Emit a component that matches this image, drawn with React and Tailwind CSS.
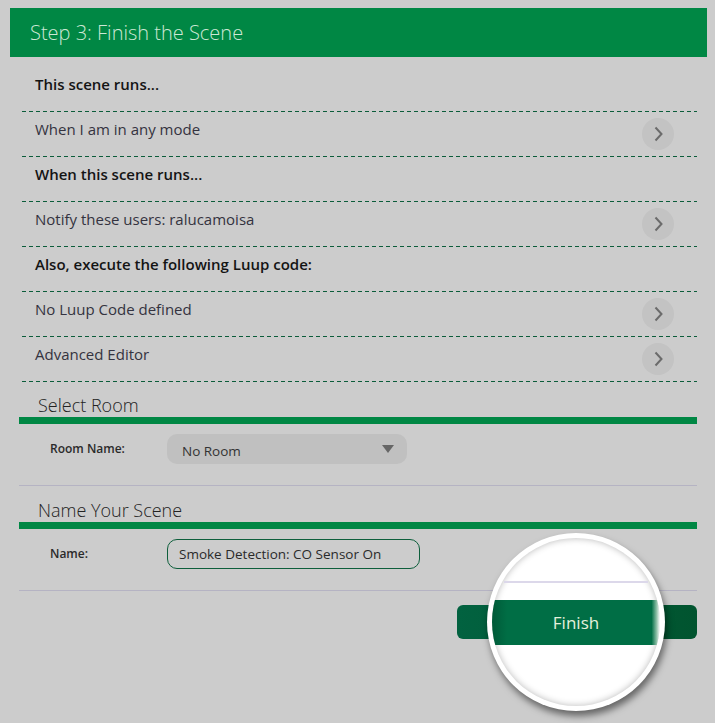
import React from "react";

const DASH =
  "h-px w-full bg-[image:repeating-linear-gradient(to_right,#0b5c3a_0_4px,transparent_4px_7px)]";

function Chevron() {
  return (
    <div className="w-[32px] h-[32px] rounded-full bg-[#c3c3c3] flex items-center justify-center shrink-0">
      <svg width="11" height="16" viewBox="0 0 11 16" fill="none">
        <path d="M2.5 1.5 L8.5 8 L2.5 14.5" stroke="#6b6b6b" strokeWidth="2" />
      </svg>
    </div>
  );
}

function HeadRow({ children }) {
  return (
    <div className="h-[44px] flex items-center pl-[13px]">
      <span className="mb-[10px] text-[15px] font-semibold text-[#141414]">{children}</span>
    </div>
  );
}

function LinkRow({ children }) {
  return (
    <div className="h-[44px] flex items-center justify-between pl-[13px] pr-[23px]">
      <span className="mb-[10px] text-[15px] text-[#343340]">{children}</span>
      <Chevron />
    </div>
  );
}

function SectionTitle({ children, tall }) {
  return (
    <div className={(tall ? "h-[36px]" : "h-[35px]") + " flex items-end pl-[19px]"}>
      <span className="text-[18px] font-light text-[#222] leading-[24px]">{children}</span>
    </div>
  );
}

export default function App() {
  return (
    <div className="relative w-[715px] h-[723px] overflow-hidden bg-[#cccccc] font-['Open_Sans',sans-serif]">
      <div className="mt-[8px] ml-[10px] mr-[8px] h-[49px] bg-[#008744] flex items-center pl-[20px]">
        <span className="text-[20px] font-light text-[#cde8d5]">Step 3: Finish the Scene</span>
      </div>

      <div className="pl-[19px] pr-[18px] mt-[10px] flex flex-col">
        <div className="ml-[3px] flex flex-col">
          <HeadRow>This scene runs...</HeadRow>
          <div className={DASH} />
          <LinkRow>When I am in any mode</LinkRow>
          <div className={DASH} />
          <HeadRow>When this scene runs...</HeadRow>
          <div className={DASH} />
          <LinkRow>Notify these users: ralucamoisa</LinkRow>
          <div className={DASH} />
          <HeadRow>Also, execute the following Luup code:</HeadRow>
          <div className={DASH} />
          <LinkRow>No Luup Code defined</LinkRow>
          <div className={DASH} />
          <LinkRow>Advanced Editor</LinkRow>
          <div className={DASH} />
        </div>

        <SectionTitle>Select Room</SectionTitle>
        <div className="h-[7px] bg-[#008744]" />
        <div className="h-[61px] pt-[10px] flex items-start">
          <div className="h-[30px] flex items-center pl-[31px] w-[148px] text-[12px] font-semibold text-[#2a2a2a]">
            Room Name:
          </div>
          <div className="w-[240px] h-[30px] rounded-[10px] bg-[#c0c0c0] flex items-center justify-between pl-[15px] pr-[13px]">
            <span className="pt-[4px] text-[13.5px] text-[#333]">No Room</span>
            <svg width="12" height="8" viewBox="0 0 12 8">
              <polygon points="0,0 12,0 6,8" fill="#666" />
            </svg>
          </div>
        </div>
        <div className="h-px bg-[#b5b3c3]" />

        <SectionTitle tall>Name Your Scene</SectionTitle>
        <div className="h-[7px] bg-[#008744]" />
        <div className="h-[61px] pt-[10px] flex items-start">
          <div className="h-[30px] flex items-center pl-[31px] w-[148px] text-[12px] font-semibold text-[#2a2a2a]">
            Name:
          </div>
          <div className="w-[253px] h-[30px] rounded-[10px] border border-[#0d5e3b] flex items-center pl-[11px]">
            <span className="text-[13.5px] text-[#2a2a2a]">Smoke Detection: CO Sensor On</span>
          </div>
        </div>
        <div className="h-px bg-[#b5b3c3]" />

        <div className="mt-[14px] flex justify-end">
          <button
            type="button"
            aria-label="Finish"
            className="w-[240px] h-[34px] rounded-[6px] bg-[linear-gradient(to_right,#026240,#01542f)]"
          />
        </div>
      </div>

      {/* magnifier lens over the Finish button */}
      <div className="absolute left-[487px] top-[533px] w-[178px] h-[178px] rounded-full bg-white p-[5px] shadow-[2px_5px_7px_rgba(0,0,0,0.5)]">
        <div className="w-full h-full rounded-full overflow-hidden bg-white shadow-[inset_0_0_7px_rgba(0,0,0,0.28)] flex flex-col pt-[43px]">
          <div className="mx-[12px] h-[2px] bg-[#dcd8ea]" />
          <div className="mt-[17px] h-[45px] flex items-center justify-center bg-[linear-gradient(to_right,#005a38_0%,#006e45_9%,#006e45_95%,#8fc0a8_98%,#ffffff_100%)]">
            <span className="text-[17px] text-[#e5f1dc]">Finish</span>
          </div>
        </div>
      </div>
    </div>
  );
}
